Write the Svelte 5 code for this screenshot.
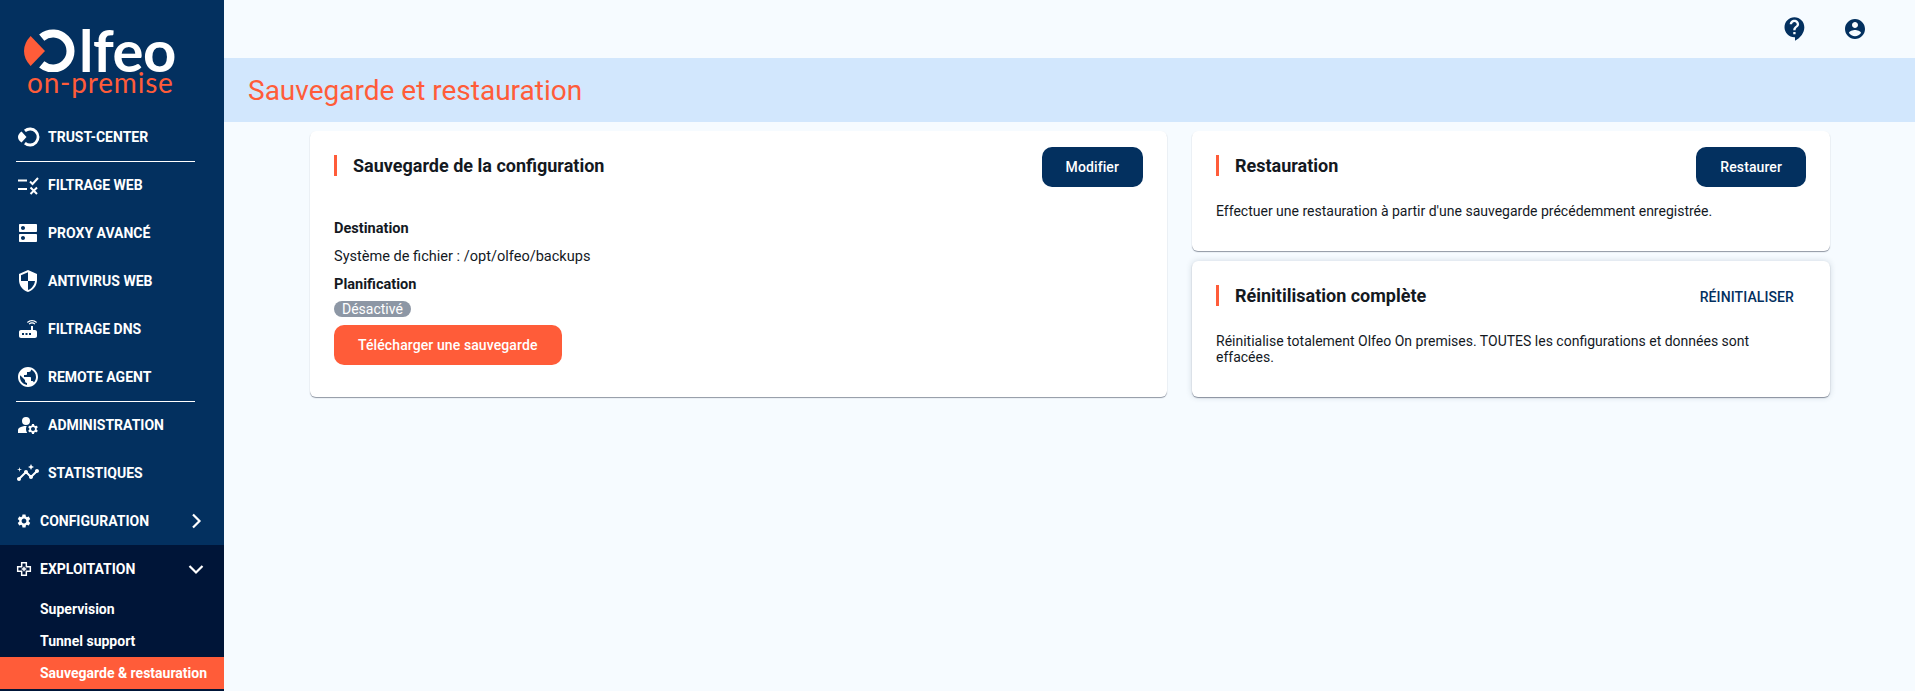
<script>
  const icons = {
    dns: "M20 13H4c-.55 0-1 .45-1 1v6c0 .55.45 1 1 1h16c.55 0 1-.45 1-1v-6c0-.55-.45-1-1-1zM7 19c-1.1 0-2-.9-2-2s.9-2 2-2 2 .9 2 2-.9 2-2 2zM20 3H4c-.55 0-1 .45-1 1v6c0 .55.45 1 1 1h16c.55 0 1-.45 1-1V4c0-.55-.45-1-1-1zM7 9c-1.1 0-2-.9-2-2s.9-2 2-2 2 .9 2 2-.9 2-2 2z",
    shield: "M12 1L3 5v6c0 5.55 3.84 10.74 9 12 5.16-1.26 9-6.45 9-12V5l-9-4zm0 10.99h7c-.53 4.12-3.28 7.79-7 8.94V12H5V6.3l7-3.11v8.8z",
    router: "M20.2 5.9l.8-.8C19.6 3.7 17.8 3 16 3s-3.6.7-5 2.1l.8.8C13 4.8 14.5 4.2 16 4.2s3 .6 4.2 1.7zm-.9.8c-.9-.9-2.1-1.4-3.3-1.4s-2.4.5-3.3 1.4l.8.8c.7-.7 1.6-1 2.5-1 .9 0 1.8.3 2.5 1l.8-.8zM19 13h-2V9h-2v4H5c-1.1 0-2 .9-2 2v4c0 1.1.9 2 2 2h14c1.1 0 2-.9 2-2v-4c0-1.1-.9-2-2-2zM8 18H6v-2h2v2zm3.5 0h-2v-2h2v2zm3.5 0h-2v-2h2v2z",
    globe: "M12 2C6.48 2 2 6.48 2 12s4.48 10 10 10 10-4.48 10-10S17.52 2 12 2zm-1 17.93c-3.95-.49-7-3.85-7-7.93 0-.62.08-1.21.21-1.79L9 15v1c0 1.1.9 2 2 2v1.93zm6.9-2.54c-.26-.81-1-1.39-1.9-1.39h-1v-3c0-.55-.45-1-1-1H8v-2h2c.55 0 1-.45 1-1V7h2c1.1 0 2-.9 2-2v-.41c2.93 1.19 5 4.06 5 7.41 0 2.08-.8 3.97-2.1 5.39z",
    admin: "M10 12a4 4 0 1 0 0-8 4 4 0 0 0 0 8zM10.67 13.02C10.45 13.01 10.23 13 10 13c-2.42 0-4.68.67-6.61 1.82C2.51 15.34 2 16.32 2 17.35V20h9.26C10.47 18.87 10 17.49 10 16c0-1.07.25-2.07.67-2.98zM20.75 16c0-.22-.03-.42-.06-.63l1.14-1.01-1-1.73-1.45.49c-.32-.27-.68-.48-1.08-.63L18 11h-2l-.3 1.49c-.4.15-.76.36-1.08.63l-1.45-.49-1 1.73 1.14 1.01c-.03.21-.06.41-.06.63s.03.42.06.63l-1.14 1.01 1 1.73 1.45-.49c.32.27.68.48 1.08.63L16 21h2l.3-1.49c.4-.15.76-.36 1.08-.63l1.45.49 1-1.73-1.14-1.01c.03-.21.06-.41.06-.63zM17 18c-1.1 0-2-.9-2-2s.9-2 2-2 2 .9 2 2-.9 2-2 2z",
    stats: "M21 8c-1.45 0-2.26 1.44-1.93 2.51l-3.55 3.56c-.3-.09-.74-.09-1.04 0l-2.55-2.55C12.27 10.45 11.46 9 10 9c-1.45 0-2.27 1.44-1.93 2.52l-4.56 4.55C2.44 15.74 1 16.55 1 18c0 1.1.9 2 2 2 1.45 0 2.26-1.44 1.93-2.51l4.55-4.56c.3.09.74.09 1.04 0l2.55 2.55C12.73 16.55 13.54 18 15 18c1.45 0 2.27-1.44 1.93-2.52l3.56-3.55c1.07.33 2.51-.48 2.51-1.93 0-1.1-.9-2-2-2zM15 9l.94-2.07L18 6l-2.06-.93L15 3l-.92 2.07L12 6l2.08.93zM3.500 11 4 9l2-.5L4 8l-.5-2L3 8l-2 .5L3 9z",
    gear: "M19.14 12.94c.04-.3.06-.61.06-.94 0-.32-.02-.64-.07-.94l2.03-1.58a.49.49 0 0 0 .12-.61l-1.92-3.32a.488.488 0 0 0-.59-.22l-2.39.96c-.5-.38-1.03-.7-1.62-.94l-.36-2.54a.484.484 0 0 0-.48-.41h-3.84c-.24 0-.43.17-.47.41l-.36 2.54c-.59.24-1.13.57-1.62.94l-2.39-.96c-.22-.08-.47 0-.59.22L2.74 8.87c-.12.21-.08.47.12.61l2.03 1.58c-.05.3-.09.63-.09.94s.02.64.07.94l-2.03 1.58a.49.49 0 0 0-.12.61l1.92 3.32c.12.22.37.29.59.22l2.39-.96c.5.38 1.03.7 1.62.94l.36 2.54c.05.24.24.41.48.41h3.84c.24 0 .44-.17.47-.41l.36-2.54c.59-.24 1.13-.56 1.62-.94l2.39.96c.22.08.47 0 .59-.22l1.92-3.32c.12-.22.07-.47-.12-.61l-2.01-1.58zM12 15.6c-1.98 0-3.6-1.62-3.6-3.6s1.62-3.6 3.6-3.6 3.6 1.62 3.6 3.6-1.62 3.6-3.6 3.6z"
  };

  const mainItems = [
    { label: "TRUST-CENTER", icon: "trust", divider: true },
    { label: "FILTRAGE WEB", icon: "filter" },
    { label: "PROXY AVANCÉ", path: icons.dns },
    { label: "ANTIVIRUS WEB", path: icons.shield },
    { label: "FILTRAGE DNS", path: icons.router },
    { label: "REMOTE AGENT", path: icons.globe, divider: true },
    { label: "ADMINISTRATION", path: icons.admin },
    { label: "STATISTIQUES", path: icons.stats }
  ];
</script>

<div class="layout">
  <aside class="sidebar">
    <div class="logo">
      <div class="logo-top">
        <svg viewBox="0 0 52 44" width="52" height="44">
          <path d="M6.600 8 21 23 6.600 38Q0 31 0 23 0 15 6.600 8z" fill="#ff5c39" />
          <path d="M17.750 9.600A17.500 17.500 0 1 1 17.750 36.400" fill="none" stroke="#fff" stroke-width="8" />
        </svg>
        <span class="logo-name">lfeo</span>
      </div>
      <div class="logo-sub">on-premise</div>
    </div>

    <nav>
      {#each mainItems as item}
        <div class="nav-item">
          {#if item.icon === "trust"}
            <svg viewBox="0 0 24 24" width="24" height="24">
              <path d="M5.500 6.500 10.500 12 5.500 17.500Q2 15 2 12 2 9 5.500 6.500z" fill="#fff" />
              <path d="M8.900 5.900A8 8 0 1 1 8.900 18.100" fill="none" stroke="#fff" stroke-width="2.800" />
            </svg>
          {:else if item.icon === "filter"}
            <svg viewBox="0 0 24 24" width="24" height="24">
              <path d="M2 7.500h9M2 16h9M14 8.500l2.500 2.500L22 5M14.500 14.500l6.500 6.500M21 14.500l-6.500 6.500" fill="none" stroke="#fff" stroke-width="2" />
            </svg>
          {:else}
            <svg viewBox="0 0 24 24" width="24" height="24"><path d={item.path} fill="#fff" /></svg>
          {/if}
          <span>{item.label}</span>
        </div>
        {#if item.divider}<div class="divider"></div>{/if}
      {/each}

      <div class="nav-item">
        <svg viewBox="0 0 24 24" width="16" height="16"><path d={icons.gear} fill="#fff" /></svg>
        <span>CONFIGURATION</span>
        <svg class="chev" viewBox="0 0 24 24" width="24" height="24"><path d="M9 5.500 15.500 12 9 18.500" fill="none" stroke="#fff" stroke-width="2.200" /></svg>
      </div>

      <div class="open-group">
        <div class="nav-item">
          <svg viewBox="0 0 24 24" width="16" height="16">
            <path d="M8.500 2.500h7v6h6v7h-6v6h-7v-6h-6v-7h6zM12 8.500v7M8.500 12h7" fill="none" stroke="#fff" stroke-width="2.200" />
          </svg>
          <span>EXPLOITATION</span>
          <svg class="chev" viewBox="0 0 24 24" width="24" height="24"><path d="M5.500 9 12 15.500 18.500 9" fill="none" stroke="#fff" stroke-width="2.200" /></svg>
        </div>
        <div class="sub-list">
          <div class="sub">Supervision</div>
          <div class="sub">Tunnel support</div>
          <div class="sub active">Sauvegarde &amp; restauration</div>
        </div>
      </div>
    </nav>
  </aside>

  <main class="main">
    <header class="topbar">
      <svg viewBox="0 0 24 24" width="28" height="28"><path d="M11.500 2C6.810 2 3 5.810 3 10.500S6.810 19 11.500 19h.5v3c4.860-2.340 8-7 8-11.500C20 5.810 16.190 2 11.500 2zm1 14.500h-2v-2h2v2zm0-3.500h-2c0-3.250 3-3 3-5 0-1.100-.9-2-2-2s-2 .9-2 2h-2c0-2.210 1.790-4 4-4s4 1.790 4 4c0 2.500-3 2.750-3 5z" fill="#03305f" /></svg>
      <svg viewBox="0 0 24 24" width="24" height="24"><path d="M12 2C6.480 2 2 6.480 2 12s4.480 10 10 10 10-4.480 10-10S17.520 2 12 2zm0 3c1.660 0 3 1.340 3 3s-1.340 3-3 3-3-1.340-3-3 1.340-3 3-3zm0 14.200c-2.500 0-4.710-1.280-6-3.220.03-1.990 4-3.080 6-3.080 1.990 0 5.970 1.090 6 3.080-1.290 1.940-3.500 3.220-6 3.220z" fill="#03305f" /></svg>
    </header>

    <div class="title-bar"><h1>Sauvegarde et restauration</h1></div>

    <div class="content">
      <section class="card">
        <div class="card-head">
          <h2>Sauvegarde de la configuration</h2>
          <button class="btn navy">Modifier</button>
        </div>
        <div class="config">
          <strong>Destination</strong>
          <p>Système de fichier : /opt/olfeo/backups</p>
          <strong>Planification</strong>
          <span class="chip">Désactivé</span>
          <button class="btn orange">Télécharger une sauvegarde</button>
        </div>
      </section>

      <div class="right-col">
        <section class="card">
          <div class="card-head">
            <h2>Restauration</h2>
            <button class="btn navy">Restaurer</button>
          </div>
          <p class="body">Effectuer une restauration à partir d'une sauvegarde précédemment enregistrée.</p>
        </section>
        <section class="card raised">
          <div class="card-head">
            <h2>Réinitilisation complète</h2>
            <button class="btn text">RÉINITIALISER</button>
          </div>
          <p class="body">Réinitialise totalement Olfeo On premises. TOUTES les configurations et données sont effacées.</p>
        </section>
      </div>
    </div>
  </main>
</div>

<style>
  :global(body) {
    margin: 0;
    background: #f6fbff;
    font-family: Roboto, "Liberation Sans", sans-serif;
    color: #14191f;
  }

  .layout {
    display: flex;
    height: 691px;
    overflow: hidden;
  }

  .sidebar {
    width: 224px;
    flex: none;
    background: #03305f;
    color: #fff;
    display: flex;
    flex-direction: column;
  }

  .logo {
    height: 113px;
    flex: none;
    box-sizing: border-box;
    padding: 28px 0 0 24px;
    font-family: Lato, sans-serif;
  }

  .logo-top {
    display: flex;
    height: 44px;
    align-items: flex-start;
    gap: 3px;
  }

  .logo-name {
    font-size: 58px;
    font-weight: 700;
    line-height: 44px;
    letter-spacing: -0.5px;
  }

  .logo-sub {
    margin-left: 3px;
    font-size: 28px;
    font-weight: 400;
    line-height: 20px;
    letter-spacing: 0.8px;
    color: #ff5c39;
  }

  .nav-item {
    display: flex;
    align-items: center;
    height: 48px;
    padding-left: 16px;
    gap: 8px;
    font-size: 14px;
    font-weight: 700;
    flex: none;
  }

  .nav-item span {
    white-space: nowrap;
  }

  .chev {
    margin-left: auto;
    margin-right: 16px;
  }

  .divider {
    height: 1px;
    margin: 0 29px -1px 16px;
    background: #fff;
  }

  nav {
    display: flex;
    flex-direction: column;
  }

  .open-group {
    background: #001538;
    padding-bottom: 2px;
  }

  .sub-list {
    display: flex;
    flex-direction: column;
  }

  .sub {
    height: 32px;
    line-height: 32px;
    padding-left: 40px;
    font-size: 14px;
    font-weight: 700;
    white-space: nowrap;
  }

  .active {
    background: #ff5c39;
  }

  .main {
    flex: 1;
    min-width: 0;
  }

  .topbar {
    height: 58px;
    display: flex;
    justify-content: flex-end;
    align-items: center;
    gap: 34px;
    padding-right: 48px;
    box-sizing: border-box;
  }

  .title-bar {
    height: 64px;
    background: #d2e7fd;
    display: flex;
    align-items: center;
    padding-left: 24px;
  }

  h1 {
    margin: 0;
    font-size: 28px;
    font-weight: 400;
    color: #ff5c39;
  }

  .content {
    display: grid;
    grid-template-columns: 857px 638px;
    gap: 25px;
    padding: 9px 0 0 86px;
    align-items: start;
  }

  .right-col {
    display: flex;
    flex-direction: column;
    gap: 10px;
  }

  .card {
    background: #fff;
    border-radius: 6px;
    box-shadow: 0 1px 1px rgba(40, 50, 70, 0.5);
    padding: 16px 24px 32px;
  }

  .raised {
    box-shadow: 0 1px 1px rgba(40, 50, 70, 0.5), 0 0 6px rgba(40, 60, 90, 0.18);
  }

  .card-head {
    display: flex;
    justify-content: space-between;
    align-items: flex-start;
  }

  h2 {
    margin: 8px 0 0;
    height: 21px;
    line-height: 21px;
    padding-left: 16px;
    border-left: 3px solid #ff5c39;
    font-size: 18px;
    font-weight: 700;
  }

  .btn {
    border: 0;
    border-radius: 10px;
    height: 40px;
    font: 500 14px Roboto, sans-serif;
    letter-spacing: 0.1px;
    padding: 0 24px;
    color: #fff;
  }

  .navy {
    background: #03305f;
  }

  .orange {
    background: #ff5c39;
    margin-top: 8px;
  }

  .text {
    background: none;
    color: #03305f;
    padding: 0 12px;
  }

  .config {
    display: flex;
    flex-direction: column;
    align-items: flex-start;
    margin-top: 27px;
    font-size: 14.56px;
    line-height: 28px;
  }

  .config strong {
    font-weight: 700;
  }

  .config p {
    margin: 0;
  }

  .chip {
    background: #8d97a5;
    color: #fff;
    border-radius: 8px;
    height: 16px;
    line-height: 16px;
    padding: 0 8px;
    margin-top: 3px;
    font-size: 14px;
  }

  .body {
    margin: 16px 0 0;
    font-size: 14px;
    line-height: 16px;
  }
</style>
